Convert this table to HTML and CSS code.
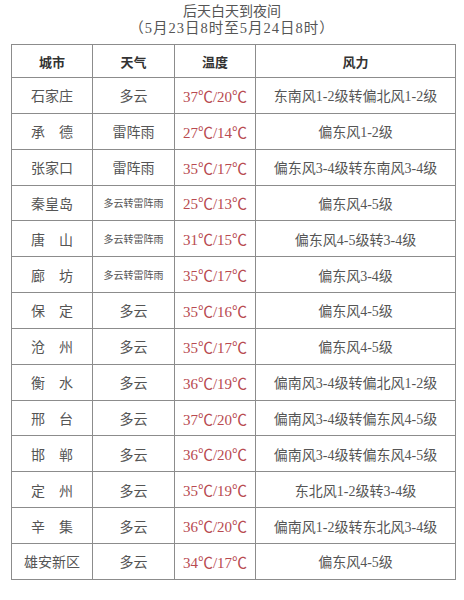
FILE: index.html
```html
<!DOCTYPE html>
<html lang="zh">
<head>
<meta charset="utf-8">
<link rel="stylesheet" href="styles.css">
</head>
<body>
<div class="page">
  <div class="title">
    <div class="t1">后天白天到夜间</div>
    <div class="t2">（5月23日8时至5月24日8时）</div>
  </div>
  <table class="wx">
    <colgroup>
      <col class="c1"><col class="c2"><col class="c3"><col class="c4">
    </colgroup>
    <thead>
      <tr><th>城市</th><th>天气</th><th>温度</th><th>风力</th></tr>
    </thead>
    <tbody>
      <tr><td>石家庄</td><td>多云</td><td class="temp">37℃/20℃</td><td>东南风1-2级转偏北风1-2级</td></tr>
      <tr><td>承　德</td><td>雷阵雨</td><td class="temp">27℃/14℃</td><td>偏东风1-2级</td></tr>
      <tr><td>张家口</td><td>雷阵雨</td><td class="temp">35℃/17℃</td><td>偏东风3-4级转东南风3-4级</td></tr>
      <tr><td>秦皇岛</td><td class="small">多云转雷阵雨</td><td class="temp">25℃/13℃</td><td>偏东风4-5级</td></tr>
      <tr><td>唐　山</td><td class="small">多云转雷阵雨</td><td class="temp">31℃/15℃</td><td>偏东风4-5级转3-4级</td></tr>
      <tr><td>廊　坊</td><td class="small">多云转雷阵雨</td><td class="temp">35℃/17℃</td><td>偏东风3-4级</td></tr>
      <tr><td>保　定</td><td>多云</td><td class="temp">35℃/16℃</td><td>偏东风4-5级</td></tr>
      <tr><td>沧　州</td><td>多云</td><td class="temp">35℃/17℃</td><td>偏东风4-5级</td></tr>
      <tr><td>衡　水</td><td>多云</td><td class="temp">36℃/19℃</td><td>偏南风3-4级转偏北风1-2级</td></tr>
      <tr><td>邢　台</td><td>多云</td><td class="temp">37℃/20℃</td><td>偏南风3-4级转偏东风4-5级</td></tr>
      <tr><td>邯　郸</td><td>多云</td><td class="temp">36℃/20℃</td><td>偏南风3-4级转偏东风4-5级</td></tr>
      <tr><td>定　州</td><td>多云</td><td class="temp">35℃/19℃</td><td>东北风1-2级转3-4级</td></tr>
      <tr><td>辛　集</td><td>多云</td><td class="temp">36℃/20℃</td><td>偏南风1-2级转东北风3-4级</td></tr>
      <tr><td>雄安新区</td><td>多云</td><td class="temp">34℃/17℃</td><td>偏东风4-5级</td></tr>
    </tbody>
  </table>
</div>
</body>
</html>
```

FILE: styles.css
```css
html, body {
  margin: 0;
  padding: 0;
  background: #ffffff;
}
body {
  font-family: "Liberation Serif", "Noto Sans CJK SC", serif;
  color: #555555;
}
.page {
  width: 464px;
  height: 600px;
  padding-top: 3px;
  box-sizing: border-box;
}
.title {
  text-align: center;
  font-size: 14px;
  line-height: 16px;
  color: #555555;
  height: 40px;
}
.title .t1 {
  margin-top: 1px;
}
.title .t2 {
  letter-spacing: 1px;
  font-size: 14.5px;
}
.wx {
  margin-left: 11px;
  width: 444px;
  border-collapse: collapse;
  table-layout: fixed;
}
.c1 { width: 81px; }
.c2 { width: 82px; }
.c3 { width: 81px; }
.c4 { width: 200px; }
.wx th, .wx td {
  border: 1px solid #8c8c8c;
  text-align: center;
  padding: 0;
  font-size: 14px;
  white-space: nowrap;
}
.wx th {
  height: 32px;
  font-weight: bold;
  color: #333;
  font-size: 13px;
}
.wx td {
  height: 34.85px;
}
.wx td.small {
  font-size: 10px;
}
.wx td.temp {
  color: #b84a50;
  font-size: 15px;
}
```
